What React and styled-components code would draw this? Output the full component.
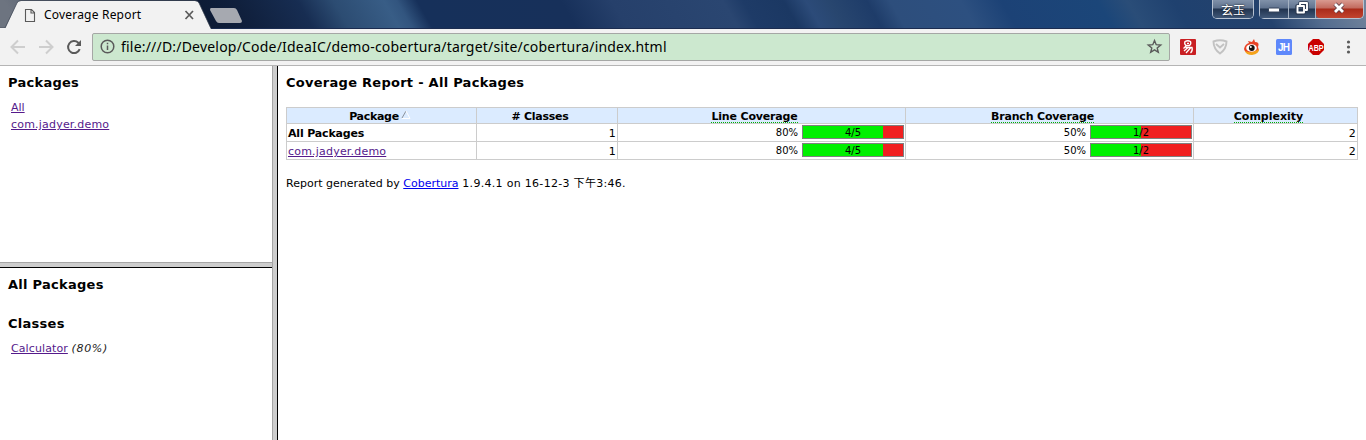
import React from "react";
import styled, { createGlobalStyle } from "styled-components";

const Global = createGlobalStyle`
  * { box-sizing: border-box; }
  html, body, #root { margin: 0; height: 100%; }
  body { overflow: hidden; background: #fff; font: 11px/14px "DejaVu Sans", Verdana, "Noto Sans CJK SC", sans-serif; color: #000; }
`;

const Window = styled.div`
  display: flex;
  flex-direction: column;
  width: 1366px;
  height: 440px;
`;

// Wallpaper tints seen through the glass title bar: [colour, x].
const glassStops = [
  ["#6d7480", 0], ["#6d7480", 20], ["#0d1b35", 210], ["#10203d", 250], ["#172d52", 310],
  ["#2c4c72", 345], ["#385d86", 395], ["#32557f", 408], ["#16305a", 428], ["#17305a", 570],
  ["#26406b", 620], ["#2a4671", 730], ["#1e3b67", 750], ["#1b3863", 790], ["#2c4b79", 812],
  ["#28466f", 835], ["#1e3c69", 872], ["#2d4e7c", 895], ["#2d5080", 965], ["#1c4276", 1005],
  ["#1b4679", 1100], ["#2a4d78", 1130], ["#1f416f", 1175], ["#24426d", 1260],
  ["#536c8f", 1310], ["#75869d", 1366],
].map(([color, x]) => `${color} ${((x / 1366) * 100).toFixed(2)}%`).join(", ");

const TitleBar = styled.header`
  display: flex;
  height: 29px;
  justify-content: space-between;
  background:
    linear-gradient(#0000 28px, #1b2c50 28px),
    linear-gradient(60deg, ${glassStops});
`;

const Tabs = styled.div`
  display: flex;
  height: 29px;
`;

const Tab = styled.div`
  position: relative;
  width: 211px;
  height: 29px;
  padding: 1px 16px 0 24px;
  display: flex;
  align-items: center;
  font: 12px/16px "Noto Sans", "Open Sans", sans-serif;
`;

const TabTitle = styled.span`
  position: relative;
  flex: 1;
  margin-left: 8px;
  letter-spacing: 0.2px;
`;

const TabShape = styled.svg`
  position: absolute;
  left: 0;
  top: 0;
`;

const Icon = styled.svg`
  position: relative;
  flex: none;
  display: block;
  overflow: visible;
`;

const WindowControls = styled.div`
  display: flex;
  height: 19px;
  padding-right: 2px;
  gap: 5px;
`;

const Glass = styled.div`
  display: flex;
  height: 19px;
  width: ${(p) => p.$width}px;
  border: 1px solid #b7c2d1;
  border-top: 0;
  border-radius: 0 0 5px 5px;
`;

const Control = styled.div`
  flex: 0 0 ${(p) => p.$width}px;
  display: flex;
  align-items: center;
  justify-content: center;
  padding-bottom: ${(p) => p.$lift || 0}px;
  color: #fff;
  font: 12px/17px "Noto Sans CJK SC", sans-serif;
  text-shadow: 0 0 2px #000;
  border-right: ${(p) => (p.$last ? "0" : "1px solid #a5b2c2")};
  border-radius: ${(p) => (p.$last ? "0 0 4px 4px" : "0")};
  background: ${(p) => p.$close
    ? "linear-gradient(#d99a90 0, #c26a5e 8px, #a92b1a 9px, #c2442f 18px)"
    : "linear-gradient(#8091a9 0, #60738f 8px, #22344f 9px, #405878 18px)"};
`;

const Toolbar = styled.div`
  display: flex;
  align-items: center;
  height: 37px;
  padding: 0 8px 1px 10px;
  background: #f2f2f2;
  border-bottom: 1px solid #b5b5b5;
`;

const NavButtons = styled.div`
  display: flex;
  width: 82px;
  gap: 12px;
`;

const AddressBar = styled.div`
  display: flex;
  align-items: center;
  width: 1078px;
  height: 28px;
  padding: 0 7px;
  border: 1px solid #a5a7a5;
  border-radius: 2px;
  background: #cce8cf;
  font: 14px/20px "Noto Sans", "Open Sans", sans-serif;
`;

const Address = styled.span`
  flex: 1;
  margin-left: 6px;
  letter-spacing: 0.2px;
  white-space: nowrap;
`;

const Extensions = styled.div`
  display: flex;
  align-items: center;
  gap: 16px;
  margin-left: 10px;
`;

const Frames = styled.main`
  display: flex;
  flex: 1;
  min-height: 0;
`;

const Sidebar = styled.aside`
  display: flex;
  flex-direction: column;
  width: 272px;
`;

const Frame = styled.section`
  height: ${(p) => (p.$height ? p.$height + "px" : "auto")};
  padding: 9px 8px 0;
`;

const HorizontalSplit = styled.div`
  height: 6px;
  background: #cdcdcd;
  border-top: 1px solid #a5a5a5;
  border-bottom: 1px solid #000;
`;

const VerticalSplit = styled.div`
  width: 6px;
  background: #cdcdcd;
  border-left: 1px solid #a5a5a5;
  border-right: 1px solid #000;
`;

const Heading = styled.h5`
  margin: 0 0 ${(p) => p.$gap}px;
  font-size: 13px;
  line-height: 16px;
  font-weight: bold;
  white-space: nowrap;
  letter-spacing: 0.27px;
`;

const Entry = styled.div`
  padding-left: 3px;
  height: 17px;
  line-height: 17px;
  letter-spacing: ${(p) => p.$track ?? 0.2}px;
  i { letter-spacing: 0.7px; color: #222; }
`;

const Link = styled.a`
  color: ${(p) => (p.$fresh ? "#0000ee" : "#551a8b")};
  text-decoration: underline;
`;

const Report = styled.section`
  flex: 1;
  padding: 9px 8px 0;
`;

const Table = styled.div`
  width: 1072px;
  border: 1px solid #ccc;
  border-bottom: 0;
`;

const Row = styled.div`
  display: grid;
  grid-template-columns: 190px 141px 288px 288px 163px;
  height: ${(p) => (p.$head ? 16 : 18)}px;
  background: ${(p) => (p.$head ? "#dbebff" : "#fff")};
  border-bottom: 1px solid #ccc;
`;

const Cell = styled.div`
  display: flex;
  align-items: center;
  justify-content: ${(p) => (p.$start ? "flex-start" : "flex-end")};
  padding: ${(p) => (p.$meter ? 0 : 3)}px 1px 0;
  font-weight: ${(p) => (p.$bold ? "bold" : "normal")};
  letter-spacing: ${(p) => (p.$bold ? "-0.17px" : "0.2px")};
  border-right: 1px solid #ccc;
  white-space: nowrap;
  &:last-child { border-right: 0; }
`;

const HeadCell = styled(Cell)`
  align-items: flex-start;
  justify-content: center;
  font-weight: bold;
  letter-spacing: ${(p) => p.$track ?? -0.17}px;
  padding: 1px ${(p) => (p.$sorted ? 4 : 15)}px 0 1px;
  line-height: 15px;
  gap: 2px;
`;

const Hint = styled.span`
  height: 14px;
  border-bottom: 1px dotted #00b000;
`;

const Percent = styled.span`
  font-size: 10px;
  letter-spacing: 0;
  margin-right: 4px;
`;

const Meter = styled.div`
  width: 102px;
  height: 14px;
  margin-bottom: 1px;
  border: 1px solid #808080;
  background: linear-gradient(90deg, #00f000 ${(p) => p.$value}%, #f02020 ${(p) => p.$value}%);
  font-size: 10px;
  letter-spacing: 0;
  line-height: 13px;
  text-align: center;
`;

const Footer = styled.div`
  margin-top: 17px;
  white-space: nowrap;
`;

const Generated = styled.span`
  letter-spacing: 0.3px;
`;

function ReportRow({ children, bold }) {
  return (
    <Row>
      <Cell $start $bold={bold}>{children}</Cell>
      <Cell>1</Cell>
      <Cell $meter><Percent>80%</Percent><Meter $value={80}>4/5</Meter></Cell>
      <Cell $meter><Percent>50%</Percent><Meter $value={50}>1/2</Meter></Cell>
      <Cell>2</Cell>
    </Row>
  );
}

export default function App() {
  return (
    <Window>
      <Global />
      <TitleBar>
        <Tabs>
          <Tab>
            <TabShape width="243" height="29">
              <path d="M5 29L17 3Q18 1 21 1H195Q198 1 199 3L211 29Z" fill="#f2f2f2" />
              <path d="M0 28H5L17 3Q18 .5 21 .5H195Q198 .5 199 3L211 28.5" fill="none" stroke="#3d4655" strokeWidth=".7" />
              <path d="M0 28H6V29H0Z" fill="#f2f2f2" />
              <path d="M211 8H234Q236 8 237 10L242 21Q242 23 240 23H219Q217 23 216 21L210 10Q210 8 211 8Z" fill="#a6a9b0" />
            </TabShape>
            <Icon width="12" height="15" viewBox="0 0 12 15" fill="none" stroke="#5a5a5a" strokeWidth="1.1"><path d="M1.5 1.5H7.5L10.5 4.5V13.5H1.5ZM7 1.5V5H10.5" /></Icon>
            <TabTitle>Coverage Report</TabTitle>
            <Icon width="11" height="10" stroke="#5a5a5a" strokeWidth="1.7"><path d="M1.5 1L9 9M9 1L1.5 9" /></Icon>
          </Tab>
        </Tabs>
        <WindowControls>
          <Glass $width={42}><Control $width={40} $last>玄玉</Control></Glass>
          <Glass $width={105}>
            <Control $width={29}><Icon width="12" height="6"><rect x=".5" y="2" width="11" height="4" rx="1" fill="#fff" stroke="#34435a" /></Icon></Control>
            <Control $width={27} $lift={2}><Icon width="12" height="12" fill="none" strokeLinejoin="round"><path d="M4 3V1H11V8H9M1 4H8V11H1Z" stroke="#2b3a52" strokeWidth="3.4" /><path d="M4 3V1H11V8H9M1.5 4H8V10.5H1.5Z" stroke="#fff" strokeWidth="1.9" /></Icon></Control>
            <Control $width={47} $close $last $lift={2}><Icon width="13" height="10" stroke="#fff"><path d="M2 1L10 9M10 1L2 9" stroke="#5b3a44" strokeWidth="4.4" /><path d="M2 1L10 9M10 1L2 9" strokeWidth="2.8" /></Icon></Control>
          </Glass>
        </WindowControls>
      </TitleBar>
      <Toolbar>
        <NavButtons>
          <Icon width="16" height="16" fill="none" stroke="#cecece" strokeWidth="2"><path d="M15 8H2M8 1.5L1.5 8L8 14.5" /></Icon>
          <Icon width="16" height="16" fill="none" stroke="#cecece" strokeWidth="2"><path d="M1 8H14M8 1.5L14.5 8L8 14.5" /></Icon>
          <Icon width="16" height="16" fill="none" stroke="#5a5a5a" strokeWidth="2"><path d="M13.7 10.2A6 6 0 1 1 12.3 3.8L14 5.5" /><path d="M15 1V7H9Z" fill="#5a5a5a" stroke="none" /></Icon>
        </NavButtons>
        <AddressBar>
          <Icon width="15" height="15" fill="none" stroke="#5a5a5a" strokeWidth="1.5"><circle cx="7.5" cy="7.5" r="6.3" /><path d="M7.5 6.5V11M7.5 3.7V5.2" /></Icon>
          <Address>file:///D:/Develop/Code/IdeaIC/demo-cobertura/target/site/cobertura/index.html</Address>
          <Icon width="15" height="15" fill="none" stroke="#5a5a5a" strokeWidth="1.4"><path d="M7.5 1.5L9.2 5.7L13.7 6L10.2 8.9L11.3 13.3L7.5 10.9L3.7 13.3L4.8 8.9L1.3 6L5.8 5.7Z" /></Icon>
        </AddressBar>
        <Extensions>
          <Icon width="16" height="16" fill="none" stroke="#fff" strokeWidth="1.3"><rect width="16" height="16" rx="1" fill="#c91f23" stroke="none" /><path d="M5 2.5Q8 1 10.5 2.5Q11.5 5 9.5 6.5H6Q4 5 5 2.5ZM7 4.3H9M6 7L3.5 9.5M5.5 8.5H12Q13 12 10.5 14M8 8.5L4 12M10.5 9L6 14" /></Icon>
          <Icon width="16" height="16" fill="none" stroke="#c2c2c2" strokeWidth="1.9"><path d="M1.5 2.5Q8 0 14.5 2.5Q14.5 10 8 14.5Q1.5 10 1.5 2.5ZM4 5L8 8.5L12 5" /></Icon>
          <Icon width="16" height="16"><path d="M0 10Q1 5 5 4L4 2L8 3L10 0L11 3Q16 3 14 8Q17 14 8 15Q1 15 0 10Z" fill="#e84225" /><path d="M1 12Q8 15 15 10Q15 15 8 16Q2 16 1 12Z" fill="#f5a51b" /><ellipse cx="7.5" cy="9" rx="5.3" ry="3.8" fill="#fff" /><circle cx="7.8" cy="9" r="2.9" fill="#17110f" /><circle cx="6.8" cy="8" r="1" fill="#fff" /></Icon>
          <Icon width="16" height="16"><rect width="16" height="16" rx="1.5" fill="#5e88fb" /><text x="8" y="12" textAnchor="middle" textLength="12" fontFamily="Liberation Sans, sans-serif" fontWeight="bold" fontSize="10" fill="#fff">JH</text></Icon>
          <Icon width="16" height="16"><path d="M5 0H11L16 5V11L11 16H5L0 11V5Z" fill="#c90000" /><text x="8" y="11.5" textAnchor="middle" textLength="15" lengthAdjust="spacingAndGlyphs" fontFamily="Liberation Sans, sans-serif" fontWeight="bold" fontSize="9.5" fill="#fff">ABP</text></Icon>
          <Icon width="16" height="16" fill="#5a5a5a"><circle cx="8.5" cy="3" r="1.6" /><circle cx="8.5" cy="8" r="1.6" /><circle cx="8.5" cy="13" r="1.6" /></Icon>
        </Extensions>
      </Toolbar>
      <Frames>
        <Sidebar>
          <Frame $height={196}>
            <Heading $gap={8}>Packages</Heading>
            <Entry $track={0}><Link>All</Link></Entry>
            <Entry><Link>com.jadyer.demo</Link></Entry>
          </Frame>
          <HorizontalSplit />
          <Frame>
            <Heading $gap={23}>All Packages</Heading>
            <Heading $gap={8}>Classes</Heading>
            <Entry $track={0.1}><Link>Calculator</Link> <i>(80%)</i></Entry>
          </Frame>
        </Sidebar>
        <VerticalSplit />
        <Report>
          <Heading $gap={16}>Coverage Report - All Packages</Heading>
          <Table>
            <Row $head>
              <HeadCell $sorted $track={-0.3}>Package <Icon width="10" height="12" fill="none"><path d="M1 9L5 2" stroke="#8b929b" /><path d="M5 2L9 9.5H1" stroke="#fff" /></Icon></HeadCell>
              <HeadCell $track={-0.28}># Classes</HeadCell>
              <HeadCell><Hint>Line Coverage</Hint></HeadCell>
              <HeadCell><Hint>Branch Coverage</Hint></HeadCell>
              <HeadCell $track={0}><Hint>Complexity</Hint></HeadCell>
            </Row>
            <ReportRow bold>All Packages</ReportRow>
            <ReportRow><Link>com.jadyer.demo</Link></ReportRow>
          </Table>
          <Footer>Report generated by <Link $fresh>Cobertura</Link><Generated> 1.9.4.1 on 16-12-3 下午3:46.</Generated></Footer>
        </Report>
      </Frames>
    </Window>
  );
}
